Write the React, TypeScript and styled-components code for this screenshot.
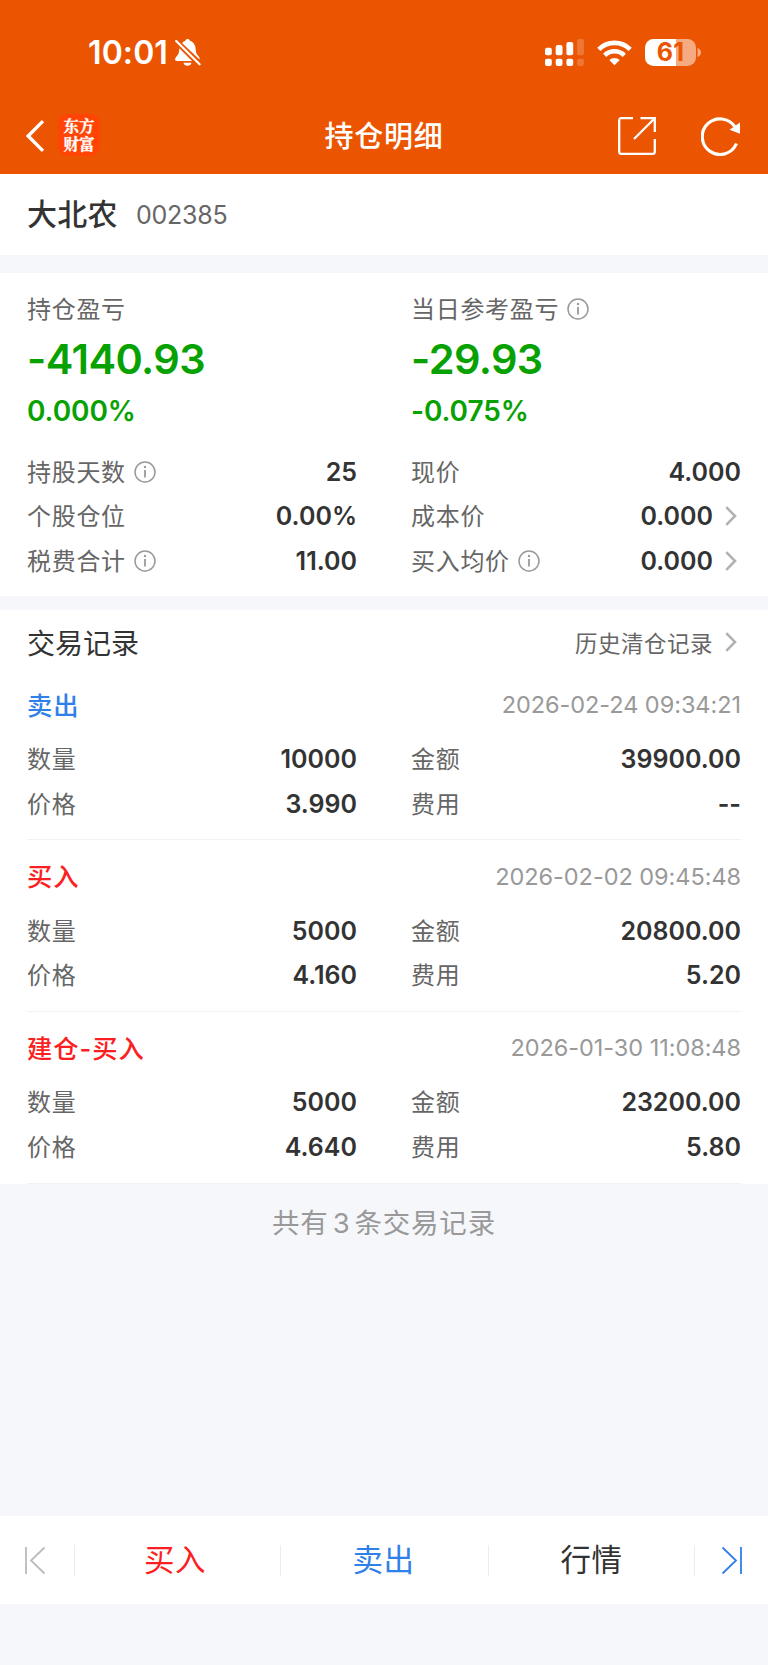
import React from 'react';
import styled, { createGlobalStyle } from 'styled-components';

const cjk = `'Noto Sans CJK SC', sans-serif`;
const latin = `Inter, 'Noto Sans CJK SC', sans-serif`;

const GlobalStyle = createGlobalStyle`
  * { box-sizing: border-box; }
  body { margin: 0; background: #f6f7fa; font-family: ${cjk}; color: #333; }
`;

const Screen = styled.div`
  width: 768px;
  height: 1665px;
  display: flex;
  flex-direction: column;
  background: #f6f7fa;
`;

const Top = styled.header`
  height: 174.4px;
  flex: none;
  background: #eb5502;
  color: #fff;
`;

const StatusBar = styled.div`
  height: 98px;
  padding: 7px 67px 0 88px;
  display: flex;
  align-items: center;
`;

const Clock = styled.span`
  font: 600 32px/40px ${latin};
  letter-spacing: 0.1px;
  width: 87px;
  white-space: nowrap;
`;

const StatusIcons = styled.div`
  margin-left: auto;
  display: flex;
  align-items: center;
`;

const Wifi = styled.svg`
  margin-left: 13px;
`;

const Battery = styled.div`
  width: 51px;
  height: 27px;
  margin-left: 13px;
  border-radius: 8.5px;
  background: linear-gradient(90deg, #fff 31px, #f5aa80 31px);
  color: #eb5502;
  font: 700 25px/27px ${latin};
  letter-spacing: 0.2px;
  text-align: center;
`;

const Nav = styled.nav`
  height: 76px;
  padding: 0 28px 0 26px;
  display: grid;
  grid-template-columns: 1fr auto 1fr;
  align-items: center;
`;

const NavSide = styled.div<{ $end?: boolean }>`
  display: flex;
  align-items: center;
  justify-content: ${p => (p.$end ? 'flex-end' : 'flex-start')};
  gap: ${p => (p.$end ? 45 : 13)}px;
`;

const Logo = styled.span`
  width: 42px;
  height: 42px;
  margin-top: -2px;
  padding-top: 3px;
  border-radius: 9px;
  background: #ff4405;
  display: flex;
  flex-direction: column;
  align-items: center;
  font: 700 15.5px/17.5px 'Noto Serif CJK SC', ${cjk};
  -webkit-text-stroke: 0.3px #fff;
`;

const PageTitle = styled.h1`
  margin: -5px 0 0 2px;
  font-size: 29px;
  line-height: 40px;
  font-weight: 500;
  letter-spacing: 0.8px;
`;

const StockBar = styled.section`
  height: 80.6px;
  flex: none;
  padding: 0 27px;
  display: flex;
  align-items: center;
  gap: 18px;
  background: #fff;
`;

const StockName = styled.h2`
  margin: -5px 0 0;
  font-size: 30px;
  line-height: 40px;
  font-weight: 500;
  letter-spacing: 0.3px;
`;

const StockCode = styled.span`
  font: 400 25px/34px ${latin};
  letter-spacing: -0.2px;
  color: #666;
`;

const Summary = styled.section`
  height: 323px;
  flex: none;
  margin-top: 18px;
  padding: 14px 27px 0;
  background: #fff;
`;

const Columns = styled.div`
  display: grid;
  grid-template-columns: 1fr 1fr;
  column-gap: 54px;
`;

const Profit = styled.div`
  display: flex;
  flex-direction: column;
  margin-bottom: 13.6px;
  font-family: ${latin};
  font-weight: 600;
  color: #07a202;
`;

const Amount = styled.strong`
  font-size: 41.5px;
  line-height: 56px;
  font-weight: 600;
  letter-spacing: -0.6px;
`;

const Percent = styled.span`
  font-size: 28px;
  line-height: 49px;
  letter-spacing: -0.1px;
`;

const Row = styled.div<{ $tall?: number }>`
  height: ${p => p.$tall ?? 44.6}px;
  display: flex;
  align-items: center;
`;

const Label = styled.span`
  margin: -2px 8px 0 0;
  font: 400 24px/34px ${cjk};
  letter-spacing: 0.7px;
  color: #666;
`;

const Value = styled.span`
  margin-left: auto;
  font: 600 25px/34px ${latin};
  color: #333;
`;

const Records = styled.section`
  flex: none;
  margin-top: 14.5px;
  background: #fff;
`;

const RecordsHead = styled.div`
  height: 58.3px;
  padding: 5px 27px 0;
  display: flex;
  align-items: center;
  justify-content: space-between;
`;

const RecordsTitle = styled.h3`
  margin: -1px 0 0;
  font-size: 28px;
  line-height: 40px;
  font-weight: 400;
`;

const History = styled.a`
  display: flex;
  align-items: center;
  font-size: 22.5px;
  line-height: 34px;
  letter-spacing: 0.5px;
  color: #666;
  span { margin-top: -1px; }
`;

const Record = styled.article`
  height: 171.6px;
  margin: 0 27px;
  padding-top: 18.4px;
  border-bottom: 1px solid #f2f2f4;
`;

const RecordTop = styled.div`
  height: 49.6px;
  padding-bottom: 13.6px;
  display: flex;
  align-items: center;
  justify-content: space-between;
`;

const Side = styled.span<{ $color: string }>`
  margin-top: 1px;
  font-family: ${latin};
  font-size: 25.3px;
  line-height: 36px;
  font-weight: 500;
  letter-spacing: 1px;
  color: ${p => p.$color};
`;

const DateText = styled.time`
  font: 400 23.5px/34px ${latin};
  letter-spacing: -0.05px;
  color: #999;
`;

const Total = styled.p`
  margin: 19px 0 0;
  flex: 1;
  font: 400 27.5px/36px ${cjk};
  letter-spacing: 0.8px;
  text-align: center;
  color: #999;
  span { margin: 0 4px; font-family: ${latin}; }
`;

const Toolbar = styled.footer`
  height: 88.4px;
  flex: none;
  margin-bottom: 60.6px;
  display: grid;
  grid-template-columns: 74px 206px 208px 206px 74px;
  align-items: center;
  background: #fff;
`;

const Tab = styled.button<{ $color?: string; $inset?: number }>`
  height: 31px;
  padding: 0 ${p => p.$inset ?? 0}px 0 0;
  border: 0;
  border-left: 1px solid #ececee;
  background: none;
  display: flex;
  align-items: center;
  justify-content: center;
  font: 400 30.5px/30px ${cjk};
  letter-spacing: 0.4px;
  color: ${p => p.$color ?? '#333'};
  &:first-child { border-left: 0; }
  span { margin-top: -5px; }
`;

const Chevron = styled.svg`
  flex: none;
  margin: 0 4px 0 12px;
`;

const Arrow = () => (
  <Chevron width="12" height="20" viewBox="0 0 12 20" fill="none" stroke="#b2b2b2" strokeWidth="2.6">
    <path d="M1.3 1.2l8.7 8.8-8.700 8.800" />
  </Chevron>
);

const Info = () => (
  <svg width="22" height="22" viewBox="0 0 22 22" fill="none" stroke="#999" strokeWidth="1.5">
    <circle cx="11" cy="11" r="10" />
    <path d="M11 9v7.500" strokeWidth="1.8" />
    <circle cx="11" cy="6" r="1.2" fill="#999" stroke="none" />
  </svg>
);

type FieldProps = { label: string; value: string; info?: boolean; link?: boolean };

const Field = ({ label, value, info, link }: FieldProps) => (
  <Row>
    <Label>{label}</Label>
    {info && <Info />}
    <Value>{value}</Value>
    {link && <Arrow />}
  </Row>
);

const RED = '#fb1f21';
const BLUE = '#2f80e8';

const records = [
  { side: '卖出', color: BLUE, time: '2026-02-24 09:34:21', qty: '10000', amount: '39900.00', price: '3.990', fee: '--' },
  { side: '买入', color: RED, time: '2026-02-02 09:45:48', qty: '5000', amount: '20800.00', price: '4.160', fee: '5.20' },
  { side: '建仓-买入', color: RED, time: '2026-01-30 11:08:48', qty: '5000', amount: '23200.00', price: '4.640', fee: '5.80' },
];

const bars = [8.7, 6, 3, 0];

export default function App() {
  return (
    <Screen>
      <GlobalStyle />
      <Top>
        <StatusBar>
          <Clock>10:01</Clock>
          <svg width="26" height="28" viewBox="0 0 26 28" fill="#fff">
            <path d="M7 4.100C8.300 2.700 9.600 2 10.300 1.800 10.700.6 11.500 0 12.600 0s2 .6 2.300 1.800c3.300 1 5.500 4 5.700 7.600.2 4 .8 5.300 2.300 7.200L24.500 18.500V20.500z" />
            <path d="M4.300 9.300 17 22H2C.8 22 0 21.300 0 20.300c0-1.600 1.600-2.700 2.800-4.300 1.200-1.700 1.400-3.600 1.500-6.700zM8.500 23.800h8c-.4 1.900-1.900 3-4 3s-3.600-1.100-4-3z" />
            <path d="M1.200 2l23.400 23.300" stroke="#fff" strokeWidth="2.2" strokeLinecap="round" />
          </svg>
          <StatusIcons>
            <svg width="39" height="27" viewBox="0 0 39 27" fill="#fff">
              {bars.map((top, i) => (
                <g key={top} opacity={i === 3 ? 0.2 : 1}>
                  <rect x={i * 10.7} y={top} width="6.8" height={16.2 - top} rx="2" />
                  <rect x={i * 10.7} y="19.8" width="6.8" height="7.2" rx="2" />
                </g>
              ))}
            </svg>
            <Wifi width="35" height="26" viewBox="0 0 35 26" fill="none" stroke="#fff" strokeWidth="4.6">
              <path d="M1.800 9.300a22.500 22.500 0 0 1 31.400 0M7.700 15.300a14 14 0 0 1 19.600 0" />
              <path d="M17.500 25.300l-5.200-5.200a7.500 7.500 0 0 1 10.400 0z" fill="#fff" stroke="none" />
            </Wifi>
            <Battery>61</Battery>
            <svg width="5" height="9" viewBox="0 0 5 9" fill="#f5aa80">
              <path d="M1.500 0C3.700.8 5 2.400 5 4.500S3.700 8.200 1.500 9z" />
            </svg>
          </StatusIcons>
        </StatusBar>
        <Nav>
          <NavSide>
            <svg width="19" height="32" viewBox="0 0 19 32" fill="none" stroke="#fff" strokeWidth="3.3">
              <path d="M17 1.200L2.200 16 17 30.800" />
            </svg>
            <Logo><span>东方</span><span>财富</span></Logo>
          </NavSide>
          <PageTitle>持仓明细</PageTitle>
          <NavSide $end>
            <svg width="38" height="38" viewBox="0 0 38 38" fill="none" stroke="#fff" strokeWidth="2.3">
              <path d="M15 1.200H3.200a2 2 0 0 0-2 2v31.600a2 2 0 0 0 2 2h31.600a2 2 0 0 0 2-2V22M22.500 1.200h14.300V15M36.500 1.500L16 22" />
            </svg>
            <svg width="39" height="39" viewBox="0 0 39 39" fill="none" stroke="#fff" strokeWidth="3.2">
              <path d="M35.500 26.500A17.800 17.800 0 1 1 34 10" />
              <path d="M39 5.500v11.200L28.500 12.700z" fill="#fff" stroke="none" />
            </svg>
          </NavSide>
        </Nav>
      </Top>

      <StockBar>
        <StockName>大北农</StockName>
        <StockCode>002385</StockCode>
      </StockBar>

      <Summary>
        <Columns>
          <Profit>
            <Row $tall={44}><Label>持仓盈亏</Label></Row>
            <Amount>-4140.93</Amount>
            <Percent>0.000%</Percent>
          </Profit>
          <Profit>
            <Row $tall={44}><Label>当日参考盈亏</Label><Info /></Row>
            <Amount>-29.93</Amount>
            <Percent>-0.075%</Percent>
          </Profit>
          <Field label="持股天数" value="25" info />
          <Field label="现价" value="4.000" />
          <Field label="个股仓位" value="0.00%" />
          <Field label="成本价" value="0.000" link />
          <Field label="税费合计" value="11.00" info />
          <Field label="买入均价" value="0.000" info link />
        </Columns>
      </Summary>

      <Records>
        <RecordsHead>
          <RecordsTitle>交易记录</RecordsTitle>
          <History><span>历史清仓记录</span><Arrow /></History>
        </RecordsHead>
        {records.map(r => (
          <Record key={r.time}>
            <RecordTop>
              <Side $color={r.color}>{r.side}</Side>
              <DateText>{r.time}</DateText>
            </RecordTop>
            <Columns>
              <Field label="数量" value={r.qty} />
              <Field label="金额" value={r.amount} />
              <Field label="价格" value={r.price} />
              <Field label="费用" value={r.fee} />
            </Columns>
          </Record>
        ))}
      </Records>

      <Total>共有<span>3</span>条交易记录</Total>

      <Toolbar>
        <Tab aria-label="上一个" $inset={4}>
          <svg width="22" height="29" viewBox="0 0 22 29" fill="none" stroke="#bbb" strokeWidth="1.8">
            <path d="M2 1v27M20.500 1.500L7 14.500l13.500 13" />
          </svg>
        </Tab>
        <Tab $color={RED} $inset={5}><span>买入</span></Tab>
        <Tab $color={BLUE} $inset={2}><span>卖出</span></Tab>
        <Tab><span>行情</span></Tab>
        <Tab aria-label="下一个">
          <svg width="22" height="29" viewBox="0 0 22 29" fill="none" stroke={BLUE} strokeWidth="1.8">
            <path d="M20 1v27M1.500 1.500L15 14.500l-13.500 13" />
          </svg>
        </Tab>
      </Toolbar>
    </Screen>
  );
}
